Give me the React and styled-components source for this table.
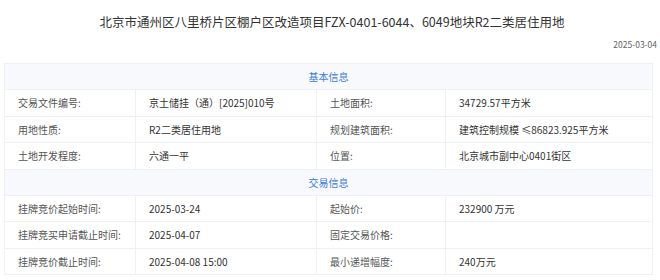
import React from "react";
import styled, { createGlobalStyle } from "styled-components";

const GlobalStyle = createGlobalStyle`
  body {
    margin: 0;
    background: #fff;
    font-family: "Noto Sans CJK SC", "Noto Sans", sans-serif;
  }
`;

const Page = styled.div`
  width: 660px;
  padding: 12px 0 0 4px;
  box-sizing: border-box;
`;

const Title = styled.h1`
  margin: 0;
  font-size: 12.5px;
  font-weight: 400;
  color: #333;
  text-align: center;
  line-height: 20px;
`;

const DateLine = styled.div`
  font-size: 8.5px;
  color: #666;
  text-align: right;
  padding-right: 3px;
  margin-top: 5px;
  line-height: 14px;
`;

const Table = styled.div`
  width: 648px;
  margin-top: 12px;
  border-top: 1px solid #eef0f4;
  border-left: 1px solid #eef0f4;
`;

const SectionHead = styled.div`
  height: 26px;
  display: flex;
  align-items: center;
  justify-content: center;
  background: #f7f9fd;
  color: #3d7cd6;
  font-size: 10px;
  border-right: 1px solid #eef0f4;
  border-bottom: 1px solid #eef0f4;
  box-sizing: border-box;
`;

const Row = styled.div`
  display: grid;
  grid-template-columns: 131px 181px 129px 207px;
  height: 26.5px;
`;

const Cell = styled.div`
  display: flex;
  align-items: center;
  padding-left: 13px;
  font-size: 10px;
  color: ${(p) => (p.$label ? "#555" : "#333")};
  border-right: 1px solid #eef0f4;
  border-bottom: 1px solid #eef0f4;
  box-sizing: border-box;
  white-space: nowrap;
`;

const basic = [
  ["交易文件编号:", "京土储挂（通）[2025]010号", "土地面积:", "34729.57平方米"],
  ["用地性质:", "R2二类居住用地", "规划建筑面积:", "建筑控制规模 ≤86823.925平方米"],
  ["土地开发程度:", "六通一平", "位置:", "北京城市副中心0401街区"],
];

const trade = [
  ["挂牌竞价起始时间:", "2025-03-24", "起始价:", "232900 万元"],
  ["挂牌竞买申请截止时间:", "2025-04-07", "固定交易价格:", ""],
  ["挂牌竞价截止时间:", "2025-04-08 15:00", "最小递增幅度:", "240万元"],
];

const Rows = ({ data }) =>
  data.map((r, i) => (
    <Row key={i}>
      <Cell $label>{r[0]}</Cell>
      <Cell>{r[1]}</Cell>
      <Cell $label>{r[2]}</Cell>
      <Cell>{r[3]}</Cell>
    </Row>
  ));

const App = () => (
  <Page>
    <GlobalStyle />
    <Title>北京市通州区八里桥片区棚户区改造项目FZX-0401-6044、6049地块R2二类居住用地</Title>
    <DateLine>2025-03-04</DateLine>
    <Table>
      <SectionHead>基本信息</SectionHead>
      <Rows data={basic} />
      <SectionHead>交易信息</SectionHead>
      <Rows data={trade} />
    </Table>
  </Page>
);

export default App;
